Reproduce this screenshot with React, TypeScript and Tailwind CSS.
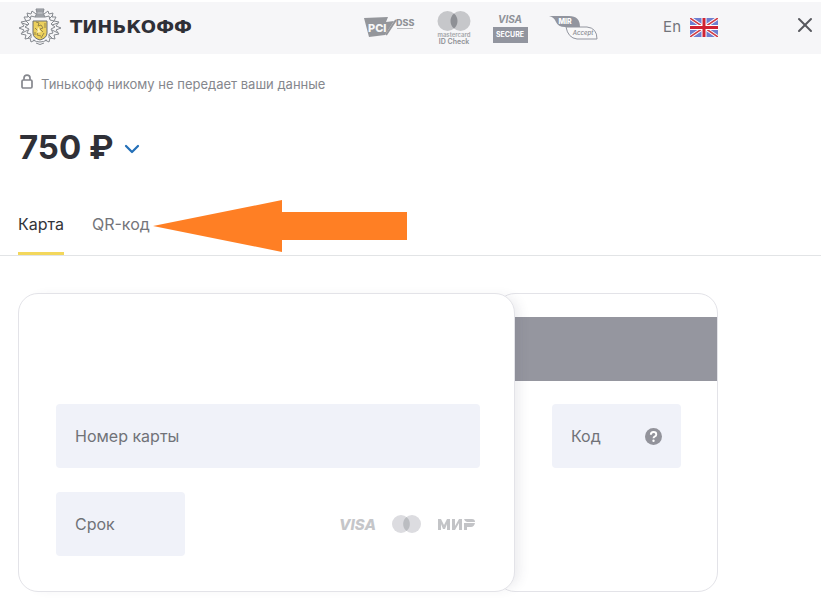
import { useState } from "react";
import { ChevronDown, X } from "lucide-react";

type Tab = "card" | "qr";

const TABS: { id: Tab; label: string }[] = [
  { id: "card", label: "Карта" },
  { id: "qr", label: "QR-код" },
];

// Half of the wreath, mirrored for the other side
function Wreath() {
  return (
    <g>
      <path d="M17 6 L13 3 L12 6 L8 5 L9 9 L5 9 L7 13 L2 14 L5 18 L0 20 L5 22 L2 26 L7 27 L6 31 L11 30 L12 34 L16 32" />
      <path d="M16 9 L12 8 L11 12 L7 13 L10 16 L6 19 L10 21 L8 25 L12 26 L12 30" />
      <path d="M8 7 L12 11 M3 15 L9 17 M3 25 L9 22 M8 31 L12 27" />
    </g>
  );
}

function Crest() {
  return (
    <svg viewBox="0 0 42 38" className="w-[42px] h-[38px]" fill="none" stroke="#85898f" strokeWidth="1" aria-hidden="true">
      <Wreath />
      <g transform="translate(42 0) scale(-1 1)">
        <Wreath />
      </g>
      <path d="M17 1 H25 L24 5 L26 9 H16 L18 5 Z" fill="#b4b7bc" />
      <path d="M18 3 H24 M17 7 H25" />
      <path d="M14 13 H28 V25 Q28 30 21 32 Q14 30 14 25 Z" fill="#ecd05c" stroke="#6a6d70" />
      <path d="M17 14 L20 15 L19 18 L22 17 L24 20 L21 21 L24 24 M16 20 L19 23 L18 27 L22 28 M26 15 V20 M16 24 V27 M25 25 L22 30" stroke="#97874a" />
      <path d="M19 19 L22 24 L18 25 Z" fill="#fff3b8" stroke="none" />
      <path d="M14 32 Q21 36 28 32 M17 35 Q21 38 25 35" />
    </svg>
  );
}

function PciDss() {
  return (
    <svg viewBox="0 0 52 24" className="w-[52px] h-6" role="img" aria-label="PCI DSS">
      <path d="M0 3 L24 2 L22 7 L30 6 L21 20 L5 22 Z" fill="#94969b" />
      <text x="4" y="17" fontSize="11" fontWeight="800" fill="#f6f6f7">PCI</text>
      <path d="M22 20 L32 5" stroke="#94969b" strokeWidth="2" />
      <text x="32" y="11" fontSize="9" fontWeight="800" fill="#8f9196">DSS</text>
      <path d="M33 13.5 H49" stroke="#b9babd" strokeWidth="1" />
    </svg>
  );
}

function IdCheck() {
  return (
    <svg viewBox="0 0 34 36" className="w-[34px] h-9" role="img" aria-label="mastercard ID Check">
      <circle cx="10.5" cy="12" r="10" fill="#c6c7ca" />
      <circle cx="23.5" cy="12" r="10" fill="#c6c7ca" />
      <path d="M17 4.4 A10 10 0 0 1 17 19.6 A10 10 0 0 1 17 4.4" fill="#8e9095" />
      <text x="17" y="28" fontSize="6" fontWeight="600" textAnchor="middle" fill="#a3a5a9">mastercard</text>
      <text x="17" y="35" fontSize="7" fontWeight="600" textAnchor="middle" fill="#8f9196">ID Check</text>
    </svg>
  );
}

function VisaSecure() {
  return (
    <svg viewBox="0 0 36 32" className="w-9 h-8" role="img" aria-label="Visa Secure">
      <text x="18" y="12" fontSize="10" fontWeight="700" fontStyle="italic" textAnchor="middle" fill="#8f9299">VISA</text>
      <rect x="1" y="16" width="35" height="16" fill="#92959f" />
      <text x="18" y="26" fontSize="7" fontWeight="700" textAnchor="middle" fill="#fff">SECURE</text>
    </svg>
  );
}

function MirAccept() {
  return (
    <svg viewBox="0 0 50 26" className="w-[50px] h-[26px]" role="img" aria-label="MIR Accept">
      <path d="M0 2 H20 Q31 2 31 13 H16 Q9 13 7 8 Q5 3 0 2 Z" fill="#92959f" />
      <path d="M17 13 H38 Q48 14 48 25 H28 Q19 24 17 13 Z" fill="#f8f8f9" stroke="#92959f" strokeWidth="1" />
      <text x="16" y="10" fontSize="7" fontWeight="800" textAnchor="middle" fill="#fff">MIR</text>
      <text x="34" y="21" fontSize="6" fontWeight="500" fontStyle="italic" textAnchor="middle" fill="#85888f">Accept</text>
    </svg>
  );
}

function UkFlag() {
  return (
    <svg viewBox="0 0 28 19" className="w-7 h-[19px]" aria-hidden="true">
      <path d="M0 0 H28 V19 H0 Z" fill="#6f7fd0" />
      <path d="M0 0 L28 19 M28 0 L0 19" stroke="#fff" strokeWidth="3.5" />
      <path d="M0 0 L28 19 M28 0 L0 19" stroke="#d03b45" strokeWidth="1.5" />
      <path d="M14 0 V19 M0 9.5 H28" stroke="#fff" strokeWidth="5" />
      <path d="M14 0 V19 M0 9.5 H28" stroke="#cf2233" strokeWidth="3" />
    </svg>
  );
}

function PaymentMarks() {
  return (
    <svg viewBox="0 0 140 20" className="w-[140px] h-5 mr-[3px]" role="img" aria-label="Visa, Mastercard, Мир">
      <text x="2" y="16" fontSize="15" fontWeight="800" fontStyle="italic" fill="#c5c6c9">VISA</text>
      <circle cx="64" cy="10" r="9" fill="#dcdce0" />
      <circle cx="75" cy="10" r="9" fill="#dcdce0" />
      <path d="M69.5 3 A9 9 0 0 1 69.5 17 A9 9 0 0 1 69.5 3" fill="#bbbdc1" />
      <g fill="#c3c4c7">
        <path d="M101 16 V5 H104 L107 11 L110 5 H113 V16 H110 V10 L108 15 H106 L104 10 V16 Z" />
        <path d="M115 16 V5 H118 V12 L122 5 H125 V16 H122 V9 L118 16 Z" />
        <path d="M127 9 H138 Q137 13 134 13 H130 V16 H127 Z M127 5 H135 Q138 5 138 8 H130 Q128 8 127 5 Z" />
      </g>
    </svg>
  );
}

export default function App() {
  const [tab, setTab] = useState<Tab>("card");

  return (
    <div className="bg-white pt-[2px] pb-2 font-['Inter','Liberation_Sans',sans-serif] text-[#2f3037]">
      <header className="flex items-center h-[52px] pl-[19px] pr-1 pb-[2px] bg-[#f6f6f8]">
        <div className="flex items-center gap-[9px]">
          <Crest />
          <span className="font-['DejaVu_Sans',sans-serif] text-lg leading-6 font-bold">ТИНЬКОФФ</span>
        </div>

        <div className="flex items-center gap-[21px] ml-auto">
          <PciDss />
          <IdCheck />
          <VisaSecure />
          <MirAccept />
        </div>

        <button className="flex items-center gap-[9px] ml-16 text-[15px] text-[#72747b]">
          En
          <UkFlag />
        </button>
        <button className="ml-[75px] pb-1" aria-label="Закрыть">
          <X className="size-6 text-[#56575d]" strokeWidth={2} />
        </button>
      </header>

      <main>
        <p className="flex items-center gap-[7px] mt-5 px-5 text-[13px] leading-5 text-[#85878d]">
          <svg viewBox="0 0 14 16" className="w-[14px] h-4 mb-1" fill="none" stroke="#85878d" strokeWidth="1.7" aria-hidden="true">
            <rect x="2" y="6" width="10" height="8" rx="1.2" />
            <path d="M4 6 V4 Q4 1.2 7 1.2 Q10 1.2 10 4 V6" />
          </svg>
          Тинькофф никому не передает ваши данные
        </p>

        <button className="flex items-center gap-[6px] mt-[33px] ml-[19px] text-[33px] leading-10 font-bold">
          750 ₽
          <ChevronDown className="size-6 mt-[3px] text-[#2470b8]" strokeWidth={2.25} />
        </button>

        <div className="relative flex gap-7 mt-[45px] pl-[18px] border-b border-[#e2e4e6]" role="tablist">
          {TABS.map(t => (
            <button
              key={t.id}
              role="tab"
              aria-selected={tab === t.id}
              onClick={() => setTab(t.id)}
              className={`h-[43px] pb-4 text-base leading-6 border-b-[3px] ${
                tab === t.id
                  ? "border-[#f3d75c] text-[#333439]"
                  : "border-transparent text-[#74757a]"
              }`}
            >
              {t.label}
            </button>
          ))}

          {/* Pointer at the QR tab */}
          <svg viewBox="0 0 255 54" className="absolute left-[153px] -top-3 w-[255px] h-[54px]" aria-hidden="true">
            <path d="M0 26 L129 0 V12 H254 V40 H129 V52 Z" fill="#ff7f24" />
          </svg>
        </div>

        <form className="flex max-w-[718px] mt-[37px] pl-[18px]">
          {/* Front side */}
          <div className="relative z-10 flex-1 min-w-0 h-[299px] pl-[37px] pr-[34px] pt-[110px] bg-white border border-[#e3e3e8] rounded-[20px] shadow-[8px_0_12px_-4px_rgba(60,60,90,0.10)]">
            <label className="flex items-center gap-3 h-16 px-[19px] bg-[#f0f2f9] rounded-sm text-base leading-6 text-[#707278]">
              Номер карты
              <input className="flex-1 min-w-0 bg-transparent outline-none" inputMode="numeric" autoComplete="cc-number" />
            </label>
            <div className="flex items-center justify-between mt-6">
              <label className="flex items-center gap-3 w-[129px] h-16 px-[19px] bg-[#f0f2f9] rounded-sm text-base leading-6 text-[#707278]">
                Срок
                <input className="flex-1 min-w-0 bg-transparent outline-none" inputMode="numeric" autoComplete="cc-exp" />
              </label>
              <PaymentMarks />
            </div>
          </div>

          {/* Back side */}
          <div className="w-[223px] h-[299px] -ml-5 pt-[23px] border border-[#e3e3e8] rounded-[20px]">
            <div className="h-16 bg-[#95969f]" />
            <div className="flex items-center w-[129px] h-16 mt-[23px] ml-[56px] px-[19px] bg-[#f0f2f9] rounded-sm">
              <label className="flex flex-1 items-center gap-2 min-w-0 text-base leading-6 text-[#707278]">
                Код
                <input className="flex-1 min-w-0 bg-transparent outline-none" inputMode="numeric" autoComplete="cc-csc" />
              </label>
              <button type="button" aria-label="Что такое код?">
                <svg viewBox="0 0 16 16" className="size-[17px]" fill="none" aria-hidden="true">
                  <circle cx="8" cy="8" r="8" fill="#92939b" />
                  <path d="M5.5 6.3 Q5.5 3.8 8 3.8 Q10.6 3.8 10.6 6 Q10.6 7.2 9.3 7.9 Q8 8.5 8 9.7" stroke="#fff" strokeWidth="1.8" />
                  <circle cx="8" cy="12" r="1.1" fill="#fff" />
                </svg>
              </button>
            </div>
          </div>
        </form>
      </main>
    </div>
  );
}
